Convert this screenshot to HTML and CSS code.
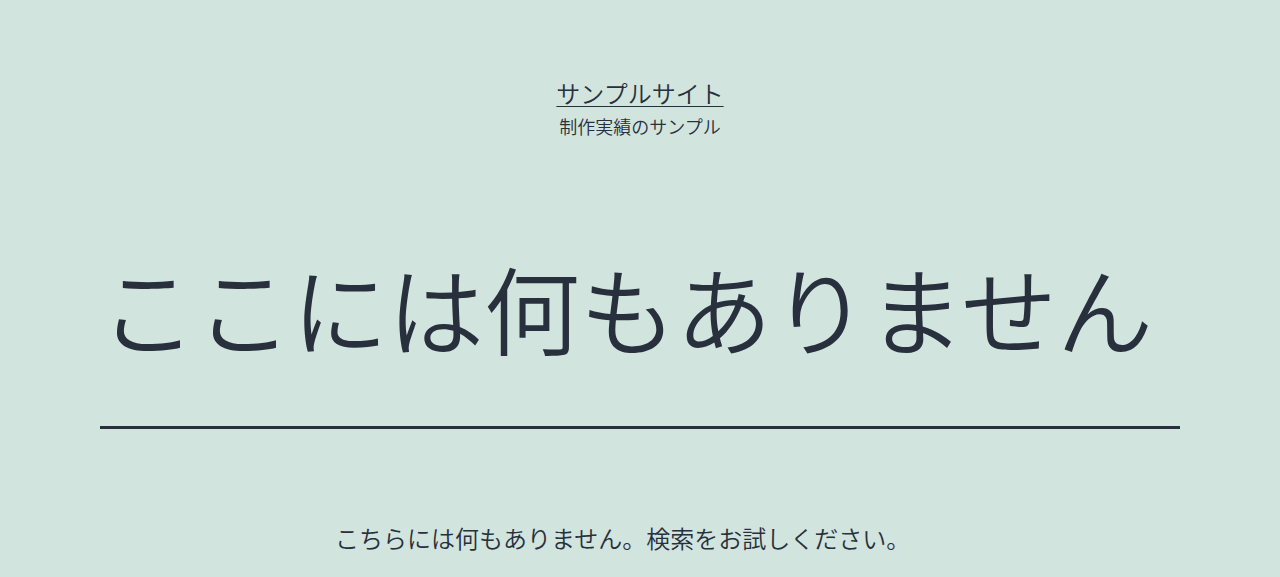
FILE: index.html
```html
<!DOCTYPE html>
<html lang="ja">
<head>
  <meta charset="UTF-8">
  <meta name="viewport" content="width=device-width, initial-scale=1">
  <title>ページが見つかりませんでした - サンプルサイト</title>
  <link rel="stylesheet" href="styles.css">
</head>
<body>
  <header class="site-header">
    <p class="site-title"><a href="/">サンプルサイト</a></p>
    <p class="site-description">制作実績のサンプル</p>
  </header>

  <main class="site-main">
    <div class="page-header">
      <h1 class="page-title">ここには何もありません</h1>
    </div>
    <div class="page-content">
      <p>こちらには何もありません。検索をお試しください。</p>
    </div>
  </main>
</body>
</html>
```

FILE: styles.css
```css
body {
  margin: 0;
  background-color: #d1e4dd;
  color: #28303d;
  font-family: "Noto Sans CJK JP", sans-serif;
  font-weight: 350;
}

p, h1 {
  margin: 0;
}

.site-header {
  padding: 75px 20px 0;
  text-align: center;
}

.site-title {
  font-size: 24px;
  line-height: 36px;
}

.site-title a {
  color: inherit;
  text-decoration: underline;
  text-decoration-thickness: 1px;
  text-underline-offset: 3px;
}

.site-description {
  font-size: 18px;
  line-height: 30px;
}

.site-main {
  padding: 105px 100px 40px;
}

.page-header {
  padding-bottom: 58px;
  border-bottom: 3px solid #28303d;
}

.page-title {
  font-size: 96px;
  font-weight: 350;
  line-height: 122px;
}

.page-content {
  max-width: 610px;
  margin: 0 auto;
  padding-top: 89px;
  font-size: 24px;
  line-height: 40px;
}
```
